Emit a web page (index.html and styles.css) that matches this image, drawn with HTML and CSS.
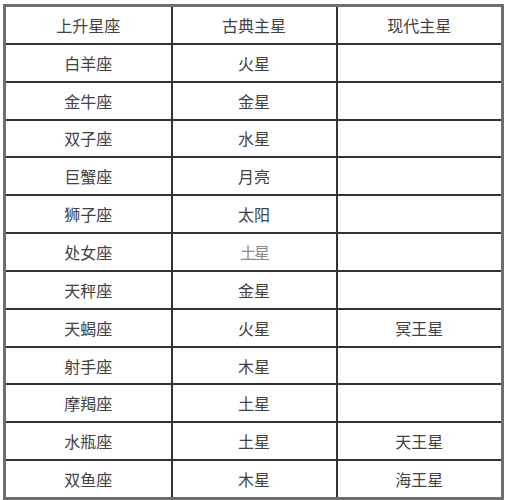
FILE: index.html
```html
<!DOCTYPE html>
<html lang="zh-CN">
<head>
<meta charset="utf-8">
<link rel="stylesheet" href="styles.css">
</head>
<body>
<table class="chart">
  <colgroup><col class="c1"><col class="c2"><col class="c3"></colgroup>
  <tr><td>上升星座</td><td>古典主星</td><td>现代主星</td></tr>
  <tr><td>白羊座</td><td>火星</td><td></td></tr>
  <tr><td>金牛座</td><td>金星</td><td></td></tr>
  <tr><td>双子座</td><td>水星</td><td></td></tr>
  <tr><td>巨蟹座</td><td>月亮</td><td></td></tr>
  <tr><td>狮子座</td><td>太阳</td><td></td></tr>
  <tr><td>处女座</td><td><span class="faded">土星</span></td><td></td></tr>
  <tr><td>天秤座</td><td>金星</td><td></td></tr>
  <tr><td>天蝎座</td><td>火星</td><td>冥王星</td></tr>
  <tr><td>射手座</td><td>木星</td><td></td></tr>
  <tr><td>摩羯座</td><td>土星</td><td></td></tr>
  <tr><td>水瓶座</td><td>土星</td><td>天王星</td></tr>
  <tr><td>双鱼座</td><td>木星</td><td>海王星</td></tr>
</table>
</body>
</html>
```
FILE: styles.css
```css
html, body {
  margin: 0;
  padding: 0;
  background: #fff;
}
body {
  padding: 4px 0 0 3px;
}
.chart {
  border-collapse: collapse;
  table-layout: fixed;
  width: 500px;
  border: 3px solid #6e6e6e;
  font-family: "Noto Sans CJK SC", "Noto Sans", sans-serif;
  font-size: 16px;
  color: #424242;
}
.c1 { width: 167px; }
.c2 { width: 165px; }
.c3 { width: 166px; }
.chart td {
  height: 35.85px;
  padding: 0;
  text-align: center;
  vertical-align: middle;
  border: 2px solid #333;
  line-height: 20px;
}
.chart tr:first-child td { border-top: 3px solid #6e6e6e; }
.chart tr:last-child td { border-bottom: 3px solid #6e6e6e; }
.chart td:first-child { border-left: 3px solid #6e6e6e; }
.chart td:last-child { border-right: 3px solid #6e6e6e; }
.faded {
  color: #8a8a8a;
  letter-spacing: -2px;
}
```
